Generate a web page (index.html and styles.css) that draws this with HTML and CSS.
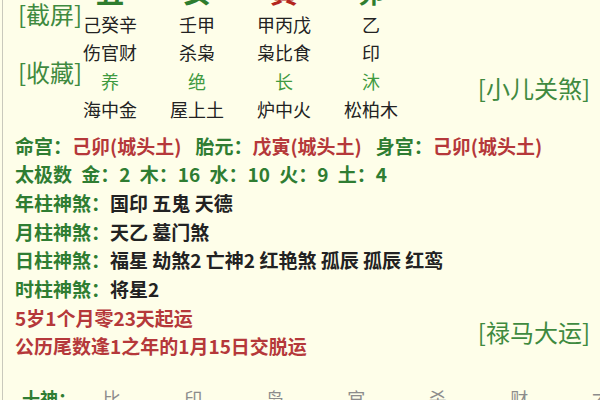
FILE: index.html
```html
<!DOCTYPE html>
<html lang="zh-CN">
<head>
<meta charset="utf-8">
<title>八字排盘</title>
<link rel="stylesheet" href="styles.css">
</head>
<body>
<div class="page">
  <section class="chart">
    <div class="tags-left">
      <span class="tag tag-cap">[截屏]</span>
      <span class="tag tag-fav">[收藏]</span>
    </div>
    <div class="pillars">
      <span class="zhi g">丑</span><span class="zhi g">亥</span><span class="zhi r">寅</span><span class="zhi g">卯</span>
      <span>己癸辛</span><span>壬甲</span><span>甲丙戊</span><span>乙</span>
      <span>伤官财</span><span>杀枭</span><span>枭比食</span><span>印</span>
      <span class="ls">养</span><span class="ls">绝</span><span class="ls">长</span><span class="ls">沐</span>
      <span>海中金</span><span>屋上土</span><span>炉中火</span><span>松柏木</span>
    </div>
    <div class="tags-right">
      <span class="tag">[小儿关煞]</span>
    </div>
  </section>

  <section class="info">
    <p class="line"><span class="lab">命宫：</span><span class="red">己卯(城头土)</span><span class="lab gap">胎元：</span><span class="red">戊寅(城头土)</span><span class="lab gap">身宫：</span><span class="red">己卯(城头土)</span></p>
    <p class="line lab tj">太极数 金：2 木：16 水：10 火：9 土：4</p>
    <p class="line"><span class="lab">年柱神煞：</span><span class="blk">国印 五鬼 天德</span></p>
    <p class="line"><span class="lab">月柱神煞：</span><span class="blk">天乙 墓门煞</span></p>
    <p class="line"><span class="lab">日柱神煞：</span><span class="blk">福星 劫煞2 亡神2 红艳煞 孤辰 孤辰 红鸾</span></p>
    <p class="line"><span class="lab">时柱神煞：</span><span class="blk">将星2</span></p>
  </section>

  <section class="yun">
    <div class="yun-lines">
      <p class="line red">5岁1个月零23天起运</p>
      <p class="line red">公历尾数逢1之年的1月15日交脱运</p>
    </div>
    <span class="tag">[禄马大运]</span>
  </section>

  <section class="shishen">
    <span class="ss-lab">十神：</span>
    <span>比</span><span>印</span><span>枭</span><span>官</span><span>杀</span><span>财</span><span>才</span>
  </section>
</div>
</body>
</html>
```

FILE: styles.css
```css
html, body {
  margin: 0;
  padding: 0;
  background: #fefee9;
  overflow: hidden;
  font-family: "Noto Sans CJK SC", "Noto Sans", sans-serif;
}

.page {
  margin-left: 2px;
  border-left: 1px solid #c9c9bc;
  padding: 0 10px 0 12px;
  height: 400px;
  box-sizing: border-box;
  overflow: hidden;
}

.chart {
  display: flex;
  align-items: flex-start;
  margin-top: -19px;
}

.tags-left {
  width: 64px;
  margin-left: 3px;
  display: flex;
  flex-direction: column;
}

.tag {
  font-size: 24px;
  line-height: 28px;
  color: #3f8a3f;
  white-space: nowrap;
}

.tag-cap { margin-top: 19px; }
.tag-fav { margin-top: 30px; }

.pillars {
  display: grid;
  grid-template-columns: repeat(4, 56px);
  grid-auto-rows: 28.5px;
  column-gap: 31px;
  justify-items: center;
  align-items: center;
  font-size: 18px;
  line-height: 28.5px;
  color: #222;
  white-space: nowrap;
}

.zhi {
  align-self: start;
  margin-top: -4px;
  font-size: 28px;
  font-weight: 700;
}
.zhi.g { color: #2e7d2e; }
.zhi.r { color: #b3261e; }

.ls { color: #3f9a3f; }

.tags-right {
  margin-left: auto;
  margin-top: 93px;
}

.info {
  margin-top: 8px;
}

.line {
  margin: 0;
  font-size: 19px;
  font-weight: 700;
  line-height: 28.7px;
  white-space: nowrap;
}

.lab { color: #2f7d32; }
.red { color: #b5383a; }
.blk { color: #222; }
.gap { margin-left: 14px; }
.tj { word-spacing: 5px; }

.yun {
  display: flex;
  align-items: center;
}

.yun .tag {
  margin-left: auto;
}

.shishen {
  display: grid;
  grid-template-columns: 49px repeat(7, 81.5px);
  margin-left: 7px;
  margin-top: 23px;
  font-size: 18px;
  line-height: 28px;
  color: #8c8c8c;
  justify-items: center;
  white-space: nowrap;
}

.ss-lab {
  justify-self: start;
  color: #2f7d32;
  font-weight: 700;
}
```
